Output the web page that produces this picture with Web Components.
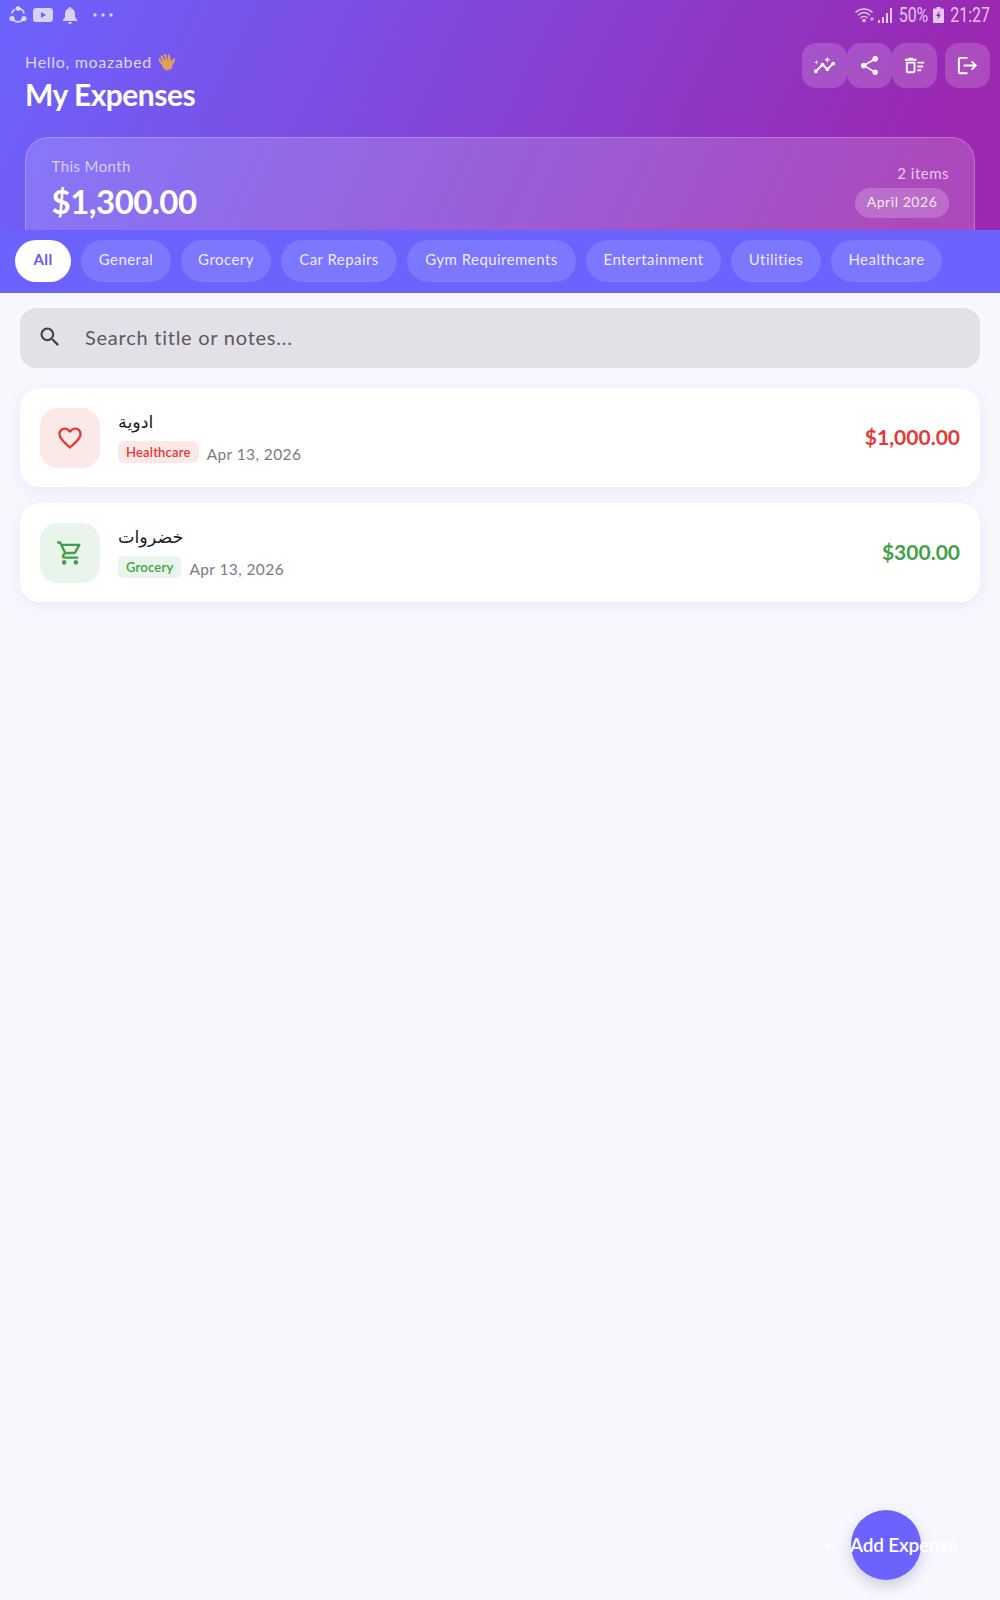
<!doctype html>
<html><head><meta charset="utf-8"><title>My Expenses</title>
<style>
html,body{margin:0;padding:0;background:#F8F7FE;font-family:Lato,"DejaVu Sans",sans-serif}
</style></head><body>
<expense-app>
  <app-header>
    <status-bar slot="status"></status-bar>
    <icon-button slot="actions" icon="insights"></icon-button>
    <icon-button slot="actions" icon="share"></icon-button>
    <icon-button slot="actions" icon="sweep" style="margin-right:8px"></icon-button>
    <icon-button slot="actions" icon="logout"></icon-button>
    <summary-card slot="summary"></summary-card>
  </app-header>
  <chip-bar>
    <filter-chip active w="56">All</filter-chip>
    <filter-chip w="90">General</filter-chip>
    <filter-chip w="90">Grocery</filter-chip>
    <filter-chip w="116">Car Repairs</filter-chip>
    <filter-chip w="169">Gym Requirements</filter-chip>
    <filter-chip w="135">Entertainment</filter-chip>
    <filter-chip w="90">Utilities</filter-chip>
    <filter-chip w="111">Healthcare</filter-chip>
  </chip-bar>
  <search-box></search-box>
  <expense-list>
    <expense-card title-text="ادوية" tag="Healthcare" date="Apr 13, 2026" amount="$1,000.00" color="#E53935" bg="#FBE9E8" icon="heart"></expense-card>
    <expense-card title-text="خضروات" tag="Grocery" date="Apr 13, 2026" amount="$300.00" color="#43A047" bg="#E9F4EA" icon="cart"></expense-card>
  </expense-list>
  <add-fab></add-fab>
</expense-app>
<script>
const ICONS={
insights:'<path d="M21 8c-1.45 0-2.26 1.44-1.93 2.51l-3.55 3.56c-.3-.09-.74-.09-1.04 0l-2.55-2.55C12.27 10.45 11.46 9 10 9c-1.45 0-2.27 1.44-1.93 2.52l-4.56 4.55C2.44 15.74 1 16.55 1 18c0 1.1.9 2 2 2 1.45 0 2.26-1.44 1.93-2.51l4.55-4.56c.3.09.74.09 1.04 0l2.55 2.55C12.73 16.55 13.54 18 15 18c1.45 0 2.27-1.44 1.93-2.52l3.56-3.55c1.07.33 2.51-.48 2.51-1.93 0-1.1-.9-2-2-2z"/><path d="M15 9l.94-2.07L18 6l-2.06-.93L15 3l-.92 2.07L12 6l2.08.93zM3.5 11 4 9l2-.5L4 8l-.5-2L3 8l-2 .5L3 9z"/>',
share:'<path d="M18 16.08c-.76 0-1.44.3-1.96.77L8.91 12.7c.05-.23.09-.46.09-.7s-.04-.47-.09-.7l7.05-4.11c.54.5 1.25.81 2.04.81 1.66 0 3-1.34 3-3s-1.34-3-3-3-3 1.34-3 3c0 .24.04.47.09.7L8.04 9.81C7.5 9.31 6.79 9 6 9c-1.66 0-3 1.34-3 3s1.34 3 3 3c.79 0 1.5-.31 2.04-.81l7.12 4.16c-.05.21-.08.43-.08.65 0 1.61 1.31 2.92 2.92 2.92s2.92-1.31 2.92-2.92-1.31-2.92-2.92-2.92z"/>',
sweep:'<path d="M15 16h4v2h-4zm0-8h7v2h-7zm0 4h6v2h-6zM3 18c0 1.1.9 2 2 2h6c1.1 0 2-.9 2-2V8H3v10zm2-8h6v8H5v-8zm5-6H6L5 5H2v2h12V5h-3z"/>',
logout:'<path d="M17 7l-1.41 1.41L18.17 11H8v2h10.17l-2.58 2.58L17 17l5-5zM4 5h8V3H4c-1.1 0-2 .9-2 2v14c0 1.1.9 2 2 2h8v-2H4V5z"/>',
search:'<path d="M15.5 14h-.79l-.28-.27C15.41 12.59 16 11.11 16 9.5 16 5.91 13.09 3 9.5 3S3 5.91 3 9.5 5.91 16 9.5 16c1.61 0 3.09-.59 4.23-1.57l.27.28v.79l5 4.99L20.49 19l-4.99-5zm-6 0C7.01 14 5 11.99 5 9.5S7.01 5 9.5 5 14 7.01 14 9.5 11.99 14 9.5 14z"/>',
heart:'<path d="M16.5 3c-1.74 0-3.41.81-4.5 2.09C10.91 3.81 9.24 3 7.5 3 4.42 3 2 5.42 2 8.5c0 3.78 3.4 6.86 8.55 11.54L12 21.35l1.45-1.32C18.6 15.36 22 12.28 22 8.5 22 5.42 19.58 3 16.5 3zm-4.4 15.55l-.1.1-.1-.1C7.14 14.24 4 11.39 4 8.5 4 6.5 5.5 5 7.5 5c1.54 0 3.04.99 3.57 2.36h1.87C13.46 5.99 14.96 5 16.5 5c2 0 3.5 1.5 3.5 3.5 0 2.89-3.14 5.74-7.9 10.05z"/>',
cart:'<path d="M15.55 13c.75 0 1.41-.41 1.75-1.03l3.58-6.49c.37-.66-.11-1.48-.87-1.48H5.21l-.94-2H1v2h2l3.6 7.59-1.35 2.44C4.52 15.37 5.48 17 7 17h12v-2H7l1.1-2h7.45zM6.16 6h12.15l-2.76 5H8.53L6.16 6zM7 18c-1.1 0-1.99.9-1.99 2S5.9 22 7 22s2-.9 2-2-.9-2-2-2zm10 0c-1.1 0-1.99.9-1.99 2s.89 2 1.99 2 2-.9 2-2-.9-2-2-2z"/>'
};
function def(name,html){
  customElements.define(name,class extends HTMLElement{
    constructor(){super();this.attachShadow({mode:'open'}).innerHTML=typeof html==='function'?html(this):html;}
  });
}
def('expense-app',`<style>:host{display:block;position:relative;width:1000px;height:1600px;overflow:hidden;background:#F8F7FE}</style><slot></slot>`);

def('status-bar',`<style>
:host{display:flex;align-items:center;height:30px;padding:0 9px 0 9px;box-sizing:border-box}
svg{display:block;flex:none}
.l{display:flex;align-items:center;fill:rgba(255,255,255,.72)}
.r{margin-left:auto;display:flex;align-items:center;color:rgba(255,255,255,.74);fill:rgba(255,255,255,.74)}
.t{font:400 21px/30px Roboto,sans-serif;display:inline-block;transform:scaleX(.76);white-space:nowrap}
.p{width:30px;display:flex;justify-content:center;margin-left:5px}
.c{width:42px;display:flex;justify-content:center;margin-left:5px}
</style>
<div class="l">
 <svg width="18" height="18" viewBox="0 0 18 18"><path d="M9 2.600a6.400 6.400 0 0 1 6.200 4.900M14.200 13.200a6.400 6.400 0 0 1-10.400 0M2.800 7.500A6.400 6.400 0 0 1 6 3.200" fill="none" stroke="rgba(255,255,255,.72)" stroke-width="1.700"/><circle cx="9" cy="2.600" r="2.400"/><circle cx="3" cy="12.600" r="2.600"/><circle cx="15" cy="12.600" r="2.600"/></svg>
 <svg style="margin-left:6px" width="20" height="16" viewBox="0 0 20 16"><path fill-rule="evenodd" d="M3 1h14a3 3 0 0 1 3 3v8a3 3 0 0 1-3 3H3a3 3 0 0 1-3-3V4a3 3 0 0 1 3-3zM8 5v6l5-3z"/></svg>
 <svg style="margin-left:9px" width="16" height="17" viewBox="0 0 16 17"><path d="M8 0c.8 0 1.200.6 1.200 1.300C11.500 2 13 4 13 6.500V10l2 3v1H1v-1l2-3V6.500C3 4 4.500 2 6.800 1.300 6.800.6 7.200 0 8 0zM6 15h4a2 2 0 0 1-4 0z"/></svg>
 <svg style="margin-left:15px" width="20" height="4" viewBox="0 0 20 4"><circle cx="2" cy="2" r="1.700"/><circle cx="10" cy="2" r="1.700"/><circle cx="18" cy="2" r="1.700"/></svg>
</div>
<div class="r">
 <svg width="21" height="16" viewBox="0 0 21 16"><path d="M.5 5.500C5.500.8 12.500.8 17.500 5.500M3 8.200c3.700-3.300 8.300-3.300 12 0M5.500 10.900c2.300-2 4.700-2 7 0" fill="none" stroke="rgba(255,255,255,.74)" stroke-width="1.400"/><circle cx="9" cy="13.500" r="1.800"/><path d="M15 11.500h1.500V10h1v1.500H19v1h-1.500V14h-1v-1.500H15z"/></svg>
 <svg style="margin-left:2px" width="15" height="15" viewBox="0 0 15 15"><rect x="0" y="12" width="2" height="3"/><rect x="4" y="9" width="2" height="6"/><rect x="8" y="5" width="2" height="10"/><rect x="12" y="0" width="2" height="15"/></svg>
 <span class="p"><span class="t">50%</span></span>
 <svg style="margin-left:5px" width="11" height="16" viewBox="0 0 11 16"><path fill-rule="evenodd" d="M3.500 0h4v1.500H10a1 1 0 0 1 1 1V15a1 1 0 0 1-1 1H1a1 1 0 0 1-1-1V2.500a1 1 0 0 1 1-1h2.500zM6.500 4 3 9h2.200L4.500 12.500 8 7.500H5.800z"/></svg>
 <span class="c"><span class="t">21:27</span></span>
</div>`);

def('icon-button',h=>`<style>
:host{display:flex;align-items:center;justify-content:center;width:45px;height:45px;border-radius:14px;background:rgba(255,255,255,.17);flex:none}
svg{width:23px;height:23px;fill:#fff;display:block}
</style><svg viewBox="0 0 24 24">${ICONS[h.getAttribute('icon')]}</svg>`);

def('app-header',`<style>
:host{display:block;height:230px;overflow:hidden;background:linear-gradient(115deg,#6C63FF 0%,#9C27B0 92%);box-sizing:border-box}
.top{display:flex;justify-content:space-between;padding:13px 10px 0 25px;height:107px;box-sizing:border-box}
.hello{font:400 16px/22px Lato,sans-serif;letter-spacing:.7px;color:rgba(255,255,255,.76);margin-top:8px;display:flex;align-items:center;gap:6px}
.hello svg{display:block}
h1{margin:2px 0 0;font:700 30px/38px Lato,sans-serif;letter-spacing:-.5px;color:#fff}
.act{display:flex;align-items:flex-start}
</style>
<slot name="status"></slot>
<div class="top"><div><div class="hello"><span>Hello, moazabed</span><svg width="18" height="17" viewBox="0 0 18 17" fill="#DDA25A"><path d="M3.500 9 1.500 5.500M6 7.500 3.600 2.500M8.700 6.500 7 1.200M11.500 6.500 10.800 1.600M14.400 9.500 16 5.500" stroke="#DDA25A" stroke-width="2.200" stroke-linecap="round"/><path d="M3 8.500 6 6l7-.5 2 4-1.500 5.500-5.500 1.500L4.500 13z"/></svg></div><h1>My Expenses</h1></div><div class="act"><slot name="actions"></slot></div></div>
<slot name="summary"></slot>`);

def('summary-card',`<style>
:host{display:flex;justify-content:space-between;margin:0 25px;height:125px;padding:18px 25px 0 25.500px;box-sizing:border-box;border-radius:24px;border:1px solid rgba(255,255,255,.22);background:rgba(255,255,255,.16)}
.a{font:400 15px/20px Lato,sans-serif;letter-spacing:.4px;color:rgba(255,255,255,.66)}
.b{font:700 33px/42px Lato,sans-serif;letter-spacing:-.5px;color:#fff;margin-top:4px}
.r{display:flex;flex-direction:column;align-items:flex-end;padding-top:7px}
.i{font:400 15px/20px Lato,sans-serif;letter-spacing:.5px;color:rgba(255,255,255,.72)}
.p{margin-top:5px;height:30px;width:94px;display:flex;align-items:center;justify-content:center;border-radius:15px;background:rgba(255,255,255,.2);font:400 14px/20px Lato,sans-serif;letter-spacing:.55px;color:rgba(255,255,255,.88)}
</style><div><div class="a">This Month</div><div class="b">$1,300.00</div></div><div class="r"><div class="i">2 items</div><div class="p"><span style="position:relative;top:-1px">April 2026</span></div></div>`);

def('chip-bar',`<style>:host{display:flex;gap:10px;height:63px;padding:10px 15px 0;box-sizing:border-box;background:#6C63FF}</style><slot></slot>`);

def('filter-chip',h=>`<style>
:host{display:flex;align-items:center;justify-content:center;flex:none;height:42px;width:${h.getAttribute('w')}px;padding-bottom:5px;border-radius:21px;box-sizing:border-box;font:400 15px/20px Lato,sans-serif;letter-spacing:.45px;white-space:nowrap;background:rgba(255,255,255,.12);color:rgba(255,255,255,.88)}
:host([active]){background:#fff;color:#6359F0;font-weight:700}
</style><slot></slot>`);

def('search-box',`<style>
:host{display:flex;align-items:center;height:60px;margin:15px 20px 0;padding:0 0 2px 18px;box-sizing:border-box;border-radius:16px;background:#E3E1E8}
svg{width:24px;height:24px;fill:#444;flex:none;transform:scale(1.05)}
span{margin-left:23px;font:400 20px/24px Lato,sans-serif;letter-spacing:.75px;color:#5b5a60}
</style><svg viewBox="0 0 24 24">${ICONS.search}</svg><span>Search title or notes...</span>`);

def('expense-list',`<style>:host{display:flex;flex-direction:column;gap:16px;margin:20px 20px 0}</style><slot></slot>`);

def('expense-card',h=>{const a=n=>h.getAttribute(n);return `<style>
:host{display:flex;align-items:center;height:99px;padding:0 20px;box-sizing:border-box;border-radius:20px;background:#fff;box-shadow:0 4px 16px rgba(70,70,130,.07)}
.ic{width:60px;height:60px;border-radius:18px;display:flex;align-items:center;justify-content:center;background:${a('bg')};flex:none}
.ic svg{width:28px;height:28px;fill:${a('color')};display:block}
.m{margin-left:18px;display:flex;flex-direction:column;flex:1}
.t{font:500 17.500px/24px "DejaVu Sans",sans-serif;color:#222;align-self:flex-start;margin:-3px 0 7px}
.s{display:flex;align-items:center}
.g{height:22px;padding:0 8px;border-radius:6px;display:flex;align-items:center;background:${a('bg')};color:${a('color')};font:600 13px/16px Lato,sans-serif;letter-spacing:.2px}
.d{margin-left:8px;font:400 15.500px/20px Lato,sans-serif;letter-spacing:.4px;color:#7b7b82;position:relative;top:2px}
.v{font:700 21px/28px Lato,sans-serif;color:${a('color')};position:relative;top:-1px}
</style><div class="ic"><svg viewBox="0 0 24 24">${ICONS[a('icon')]}</svg></div>
<div class="m"><div class="t" dir="rtl">${a('title-text')}</div><div class="s"><span class="g">${a('tag')}</span><span class="d">${a('date')}</span></div></div>
<div class="v">${a('amount')}</div>`});

def('add-fab',`<style>
:host{position:absolute;left:851px;top:1510px;width:70px;height:70px;border-radius:50%;background:#6C63FF;box-shadow:0 6px 14px rgba(60,60,110,.22);display:block}
.i{position:absolute;left:-33px;top:25px;display:flex;align-items:center;color:#fff;white-space:nowrap;font:600 19px/20px Lato,sans-serif;letter-spacing:-.2px}
svg{width:18px;height:18px;fill:#fff;margin-right:14px}
</style><div class="i"><svg viewBox="0 0 24 24"><path d="M19 13h-6v6h-2v-6H5v-2h6V5h2v6h6z"/></svg><span>Add Expense</span></div>`);
</script>
</body></html>
